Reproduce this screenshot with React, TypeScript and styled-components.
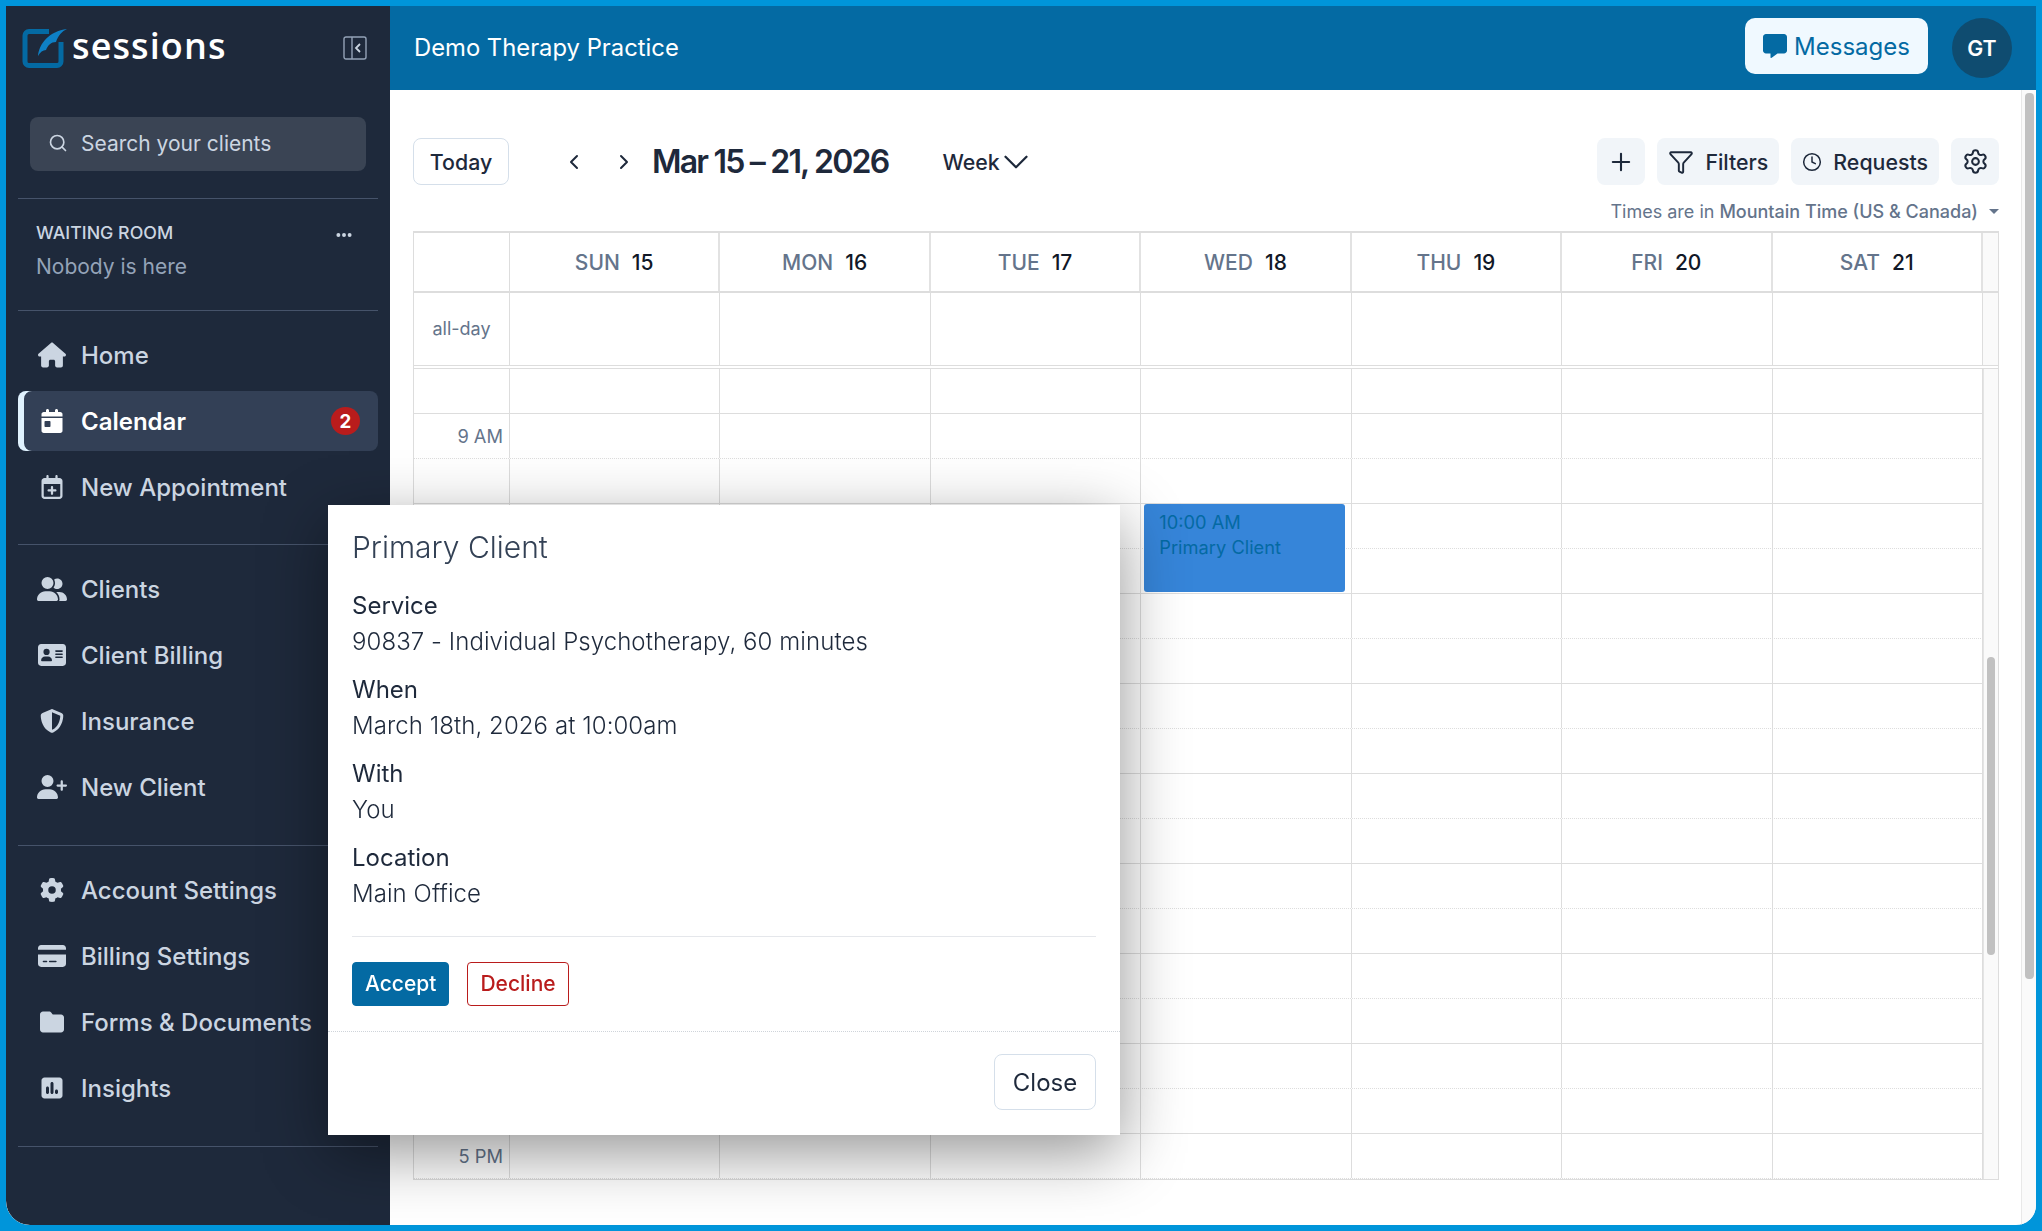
import styled, { createGlobalStyle } from 'styled-components';
import { ChevronDown, ChevronLeft, ChevronRight, Clock, Funnel, Plus, Search, Settings } from 'lucide-react';
import {
  FaAddressCard,
  FaCalendarDay,
  FaCreditCard,
  FaEllipsis,
  FaFolder,
  FaGear,
  FaHouse,
  FaMessage,
  FaRegCalendarPlus,
  FaShieldHalved,
  FaSquarePollVertical,
  FaUserGroup,
  FaUserPlus,
} from 'react-icons/fa6';
import type { ReactNode } from 'react';

const GlobalStyle = createGlobalStyle`
  html, body {
    margin: 0;
    height: 100%;
    overflow: hidden;
    font-family: Inter, "Liberation Sans", sans-serif;
    background: #0095da;
  }
  * { box-sizing: border-box; }
`;

const Frame = styled.div`
  width: 2042px;
  height: 1231px;
  padding: 6px;
  background: #0095da;
  display: flex;
`;

const Shell = styled.div`
  flex: 1;
  display: flex;
  background: #fff;
  border-radius: 0 0 20px 24px;
  overflow: hidden;
`;

const Sidebar = styled.aside`
  width: 384px;
  flex: none;
  background: #1e293b;
  border-bottom-left-radius: 24px;
  display: flex;
  flex-direction: column;
`;

const Brand = styled.div`
  height: 84px;
  display: flex;
  align-items: center;
  padding: 0 23px 0 16px;
`;

const BrandName = styled.span`
  margin: 0 0 6px -2px;
  font-family: "Open Sans", sans-serif;
  font-size: 36px;
  font-weight: 600;
  letter-spacing: 1.1px;
  color: #fff;
  flex: 1;
`;

const SearchBox = styled.div`
  margin: 27px 24px;
  height: 54px;
  background: #3a4454;
  border-radius: 8px;
  display: flex;
  align-items: center;
  gap: 13px;
  padding: 0 0 2px 18px;
  font-size: 21px;
  color: #cbd5e1;
`;

const WaitingRoom = styled.section`
  margin: 0 12px;
  height: 113px;
  border-top: 1px solid #46536a;
  border-bottom: 1px solid #46536a;
  padding: 16px 18px 0;
`;

const WaitingHead = styled.div`
  display: flex;
  align-items: center;
  justify-content: space-between;
  height: 34px;
  font-size: 17.8px;
  font-weight: 500;
  color: #cbd5e1;
  padding-right: 7px;

  svg {
    margin-top: 5px;
  }
`;

const WaitingNote = styled.div`
  margin-top: 2px;
  font-size: 21px;
  line-height: 32px;
  color: #94a3b8;
`;

const NavGroup = styled.nav`
  margin: 0 12px;
  padding: 14px 0 28px;
  display: flex;
  flex-direction: column;
  gap: 6px;
  border-bottom: 1px solid #46536a;

  &:first-of-type {
    padding-bottom: 27px;
  }
`;

const NavRow = styled.div<{ $active?: boolean }>`
  height: 60px;
  display: flex;
  align-items: center;
  gap: 15px;
  padding: 0 18px 0 20px;
  border-radius: 8px;
  font-size: 24px;
  font-weight: ${(p) => (p.$active ? 600 : 500)};
  color: ${(p) => (p.$active ? '#fff' : '#cbd5e1')};
  background: ${(p) => (p.$active ? '#334056' : 'transparent')};
  box-shadow: ${(p) => (p.$active ? 'inset 6px 0 0 #e0f2fe' : 'none')};
`;

const NavIcon = styled.span`
  width: 28px;
  flex: none;
  display: flex;
  justify-content: center;
  font-size: 24px;
  color: inherit;

  svg {
    flex: none;
  }
`;

const NavLabel = styled.span`
  flex: 1;
`;

const Badge = styled.span`
  width: 29px;
  height: 28px;
  border-radius: 50%;
  background: #b91c1c;
  color: #fff;
  font-size: 18.67px;
  font-weight: 700;
  display: flex;
  align-items: center;
  justify-content: center;
`;

const Main = styled.div`
  flex: 1;
  min-width: 0;
  display: flex;
  flex-direction: column;
`;

const TopBar = styled.header`
  height: 84px;
  flex: none;
  background: #046aa3;
  display: flex;
  align-items: center;
  padding: 0 24px 4px 24px;
  color: #fff;
`;

const Practice = styled.div`
  flex: 1;
  padding-top: 2px;
  font-size: 23.8px;
  font-weight: 400;
`;

const MessagesButton = styled.button`
  width: 183px;
  height: 56px;
  border: 0;
  border-radius: 10px;
  background: #f0f9ff;
  color: #046aa3;
  font: 400 24px Inter, sans-serif;
  display: flex;
  align-items: center;
  justify-content: center;
  gap: 7px;
`;

const Avatar = styled.div`
  width: 60px;
  height: 60px;
  margin: 2px 0 -2px 24px;
  border-radius: 50%;
  background: #0f4c70;
  display: flex;
  align-items: center;
  justify-content: center;
  font-size: 21.33px;
  font-weight: 600;
`;

const Below = styled.div`
  flex: 1;
  min-height: 0;
  display: flex;
`;

const Content = styled.main`
  flex: 1;
  min-width: 0;
  padding: 48px 22px 0 23px;
`;

const PageScrollTrack = styled.div`
  width: 15px;
  flex: none;
  background: #fafafa;
  border-left: 1px solid #e8e8e8;
  padding: 3px 2px 0 3px;
`;

const PageScrollThumb = styled.div`
  height: 886px;
  background: #c1c1c1;
  border-radius: 4px;
`;

const Toolbar = styled.div`
  height: 47px;
  display: flex;
  align-items: center;
`;

const OutlineButton = styled.button`
  height: 47px;
  width: 96px;
  border: 1px solid #d5dfea;
  border-radius: 8px;
  background: #fff;
  color: #1e293b;
  font: 500 21.33px Inter, sans-serif;
`;

const ArrowButton = styled.button`
  width: 32px;
  height: 47px;
  border: 0;
  padding: 0;
  background: transparent;
  color: #1e293b;
  display: flex;
  align-items: center;
  justify-content: center;
  margin-left: ${(p: { $gap: number }) => p.$gap}px;
`;

const RangeTitle = styled.h1`
  margin: 0 0 0 12px;
  font-size: 32px;
  font-weight: 600;
  letter-spacing: -1.8px;
  color: #1e293b;
  white-space: nowrap;
`;

const ViewPicker = styled.div`
  margin-left: 54px;
  display: flex;
  align-items: center;
  font-size: 21.33px;
  font-weight: 500;
  color: #1e293b;
`;

const WeekChevron = styled(ChevronDown)`
  margin: -11px -11px -11px -5px;
`;

const ToolGroup = styled.div`
  margin-left: auto;
  display: flex;
  gap: 12px;
`;

const ToolButton = styled.button`
  height: 47px;
  min-width: 48px;
  padding: 0 ${(p: { $pad?: number }) => p.$pad ?? 0}px;
  border: 0;
  border-radius: 8px;
  background: #f1f5f9;
  color: #1e293b;
  font: 500 21.33px Inter, sans-serif;
  display: flex;
  align-items: center;
  justify-content: center;
  gap: 11px;
`;

const TimeZoneRow = styled.div`
  height: 46px;
  padding-top: 6px;
  display: flex;
  align-items: center;
  justify-content: flex-end;
  font-size: 18px;
  color: #64748b;
`;

const ZoneName = styled.span`
  font-weight: 500;
  margin-left: 5px;
`;

const Caret = styled.span`
  margin-left: 11px;
  width: 0;
  height: 0;
  border-left: 5px solid transparent;
  border-right: 5px solid transparent;
  border-top: 5px solid #64748b;
`;

const Grid = styled.div`
  border: 1px solid #dddddd;
  border-top-width: 2px;
  width: 100%;
`;

const HeadRow = styled.div`
  display: flex;
  height: 58px;
`;

const AllDayRow = styled.div`
  display: flex;
  height: 78px;
  border-top: 2px solid #dddddd;
  border-bottom: 4px double #dddddd;
`;

const GutterHead = styled.div`
  width: 96px;
  flex: none;
  border-right: 1px solid #dddddd;
`;

const AllDayLabel = styled(GutterHead)`
  display: flex;
  align-items: center;
  justify-content: center;
  padding-bottom: 2px;
  font-size: 18px;
  color: #64748b;
`;

const DayHead = styled.div`
  flex: 1;
  border-right: 2px solid #e2e2e2;
  display: flex;
  align-items: center;
  justify-content: center;
  gap: 12px;
  font-size: 21px;
  font-weight: 500;
  color: #64748b;
`;

const DayNumber = styled.span`
  color: #111827;
`;

const DayCell = styled.div`
  flex: 1;
  position: relative;
  border-right: 1px solid #dddddd;
`;

const ScrollCorner = styled.div`
  width: 15px;
  flex: none;
  background: #fafafa;
`;

const BodyWrap = styled.div`
  display: flex;
`;

const Slots = styled.div`
  flex: 1;
  min-width: 0;
`;

const SlotRow = styled.div<{ $solid: boolean }>`
  height: 45px;
  display: flex;
  border-bottom: 1px ${(p) => (p.$solid ? 'dotted' : 'solid')} #dddddd;
`;

const TimeCell = styled.div`
  width: 96px;
  flex: none;
  border-right: 1px solid #dddddd;
  display: flex;
  align-items: center;
  justify-content: flex-end;
  padding-right: 6px;
  font-size: 18.3px;
  color: #64748b;
`;

const InnerScrollTrack = styled.div`
  width: 15px;
  flex: none;
  background: #fafafa;
  border-left: 1px solid #e4e4e4;
  padding: 288px 3px 0 3px;
`;

const InnerScrollThumb = styled.div`
  height: 298px;
  background: #c1c1c1;
  border-radius: 4px;
`;

const EventCard = styled.div`
  position: absolute;
  top: 0;
  left: 3px;
  right: 6px;
  height: 88px;
  z-index: 1;
  border-radius: 3px;
  background: #3685d9;
  color: #046aa3;
  font-size: 18.3px;
  font-weight: 400;
  line-height: 25px;
  padding: 6px 15px;
`;

const Modal = styled.div`
  position: fixed;
  left: 328px;
  top: 505px;
  width: 792px;
  height: 630px;
  z-index: 10;
  background: #fff;
  box-shadow: 0 18px 60px rgba(0, 0, 0, 0.42);
`;

const ModalBody = styled.div`
  padding: 22px 24px 0;
`;

const ModalTitle = styled.h2`
  margin: 0 0 21px;
  font-size: 30px;
  line-height: 40px;
  font-weight: 300;
  color: #334155;
`;

const DetailLabel = styled.div`
  font-size: 24px;
  line-height: 36px;
  color: #1e293b;
`;

const DetailValue = styled.div`
  font-size: 24px;
  line-height: 36px;
  font-weight: 300;
  letter-spacing: 0.07px;
  color: #1e293b;
  margin-bottom: 12px;
`;

const ActionBar = styled.div`
  margin-top: 24px;
  padding: 25px 0;
  border-top: 1px solid #e5e7eb;
  display: flex;
  gap: 18px;
`;

const ActionButton = styled.button<{ $danger?: boolean }>`
  height: 44px;
  padding: 0 12px 2px;
  border-radius: 4px;
  border: 1px solid ${(p) => (p.$danger ? '#b91c1c' : '#046aa3')};
  background: ${(p) => (p.$danger ? '#fff' : '#046aa3')};
  color: ${(p) => (p.$danger ? '#b91c1c' : '#fff')};
  font: 500 21px Inter, sans-serif;
`;

const ModalFooter = styled.div`
  border-top: 1px dotted #cfd4da;
  padding: 22px 24px 24px;
  display: flex;
  justify-content: flex-end;
`;

const CloseButton = styled.button`
  width: 102px;
  height: 56px;
  border: 1px solid #d5dfea;
  border-radius: 8px;
  background: #fff;
  color: #1e293b;
  font: 400 24px Inter, sans-serif;
`;

const Logo = () => (
  <svg width="52" height="40" viewBox="0 0 52 40" fill="none">
    <path
      d="M27 3.5H7a4 4 0 0 0-4 4v26a4 4 0 0 0 4 4h28a4 4 0 0 0 4-4V14"
      stroke="#046aa3"
      strokeWidth="5"
    />
    <path d="M16 28C17 16 27 3 45 1C40 3 36 8 34 14C29 14 26 17 24 22C21 22 18 24 16 28Z" fill="#0e80c5" />
  </svg>
);

const CollapseIcon = () => (
  <svg width="24" height="24" viewBox="0 0 24 24" fill="none" stroke="#94a3b8" strokeWidth="1.4">
    <rect x="1" y="1" width="22" height="22" rx="2" />
    <path d="M9 1v22" />
    <path d="M17 8l-4 4 4 4" stroke="#cbd5e1" strokeWidth="1.8" />
  </svg>
);

const days = [
  ['SUN', '15'],
  ['MON', '16'],
  ['TUE', '17'],
  ['WED', '18'],
  ['THU', '19'],
  ['FRI', '20'],
  ['SAT', '21'],
];

const slotLabels: Record<number, string> = { 1: '9 AM', 17: '5 PM' };

const Item = ({ icon, label, children, active }: { icon: ReactNode; label: string; children?: ReactNode; active?: boolean }) => (
  <NavRow $active={active}>
    <NavIcon>{icon}</NavIcon>
    <NavLabel>{label}</NavLabel>
    {children}
  </NavRow>
);

export default function App() {
  return (
    <>
      <GlobalStyle />
      <Frame>
        <Shell>
          <Sidebar>
            <Brand>
              <Logo />
              <BrandName>sessions</BrandName>
              <CollapseIcon />
            </Brand>
            <SearchBox>
              <Search size={20} strokeWidth={2} />
              Search your clients
            </SearchBox>
            <WaitingRoom>
              <WaitingHead>
                WAITING ROOM
                <FaEllipsis size={18} />
              </WaitingHead>
              <WaitingNote>Nobody is here</WaitingNote>
            </WaitingRoom>
            <NavGroup>
              <Item icon={<FaHouse size={28} />} label="Home" />
              <Item icon={<FaCalendarDay />} label="Calendar" active>
                <Badge>2</Badge>
              </Item>
              <Item icon={<FaRegCalendarPlus />} label="New Appointment" />
            </NavGroup>
            <NavGroup>
              <Item icon={<FaUserGroup size={30} />} label="Clients" />
              <Item icon={<FaAddressCard size={28} />} label="Client Billing" />
              <Item icon={<FaShieldHalved />} label="Insurance" />
              <Item icon={<FaUserPlus size={30} />} label="New Client" />
            </NavGroup>
            <NavGroup>
              <Item icon={<FaGear />} label="Account Settings" />
              <Item icon={<FaCreditCard size={28} />} label="Billing Settings" />
              <Item icon={<FaFolder />} label="Forms & Documents" />
              <Item icon={<FaSquarePollVertical />} label="Insights" />
            </NavGroup>
          </Sidebar>
          <Main>
            <TopBar>
              <Practice>Demo Therapy Practice</Practice>
              <MessagesButton>
                <FaMessage size={24} />
                Messages
              </MessagesButton>
              <Avatar>GT</Avatar>
            </TopBar>
            <Below>
              <Content>
                <Toolbar>
                  <OutlineButton>Today</OutlineButton>
                  <ArrowButton $gap={49}>
                    <ChevronLeft size={24} />
                  </ArrowButton>
                  <ArrowButton $gap={18}>
                    <ChevronRight size={24} />
                  </ArrowButton>
                  <RangeTitle>Mar 15 – 21, 2026</RangeTitle>
                  <ViewPicker>
                    Week
                    <WeekChevron size={42} strokeWidth={1.3} />
                  </ViewPicker>
                  <ToolGroup>
                    <ToolButton>
                      <Plus size={28} strokeWidth={1.8} />
                    </ToolButton>
                    <ToolButton $pad={11}>
                      <Funnel size={26} strokeWidth={1.8} />
                      Filters
                    </ToolButton>
                    <ToolButton $pad={11}>
                      <Clock size={20} strokeWidth={1.8} />
                      Requests
                    </ToolButton>
                    <ToolButton>
                      <Settings size={27} strokeWidth={1.8} />
                    </ToolButton>
                  </ToolGroup>
                </Toolbar>
                <TimeZoneRow>
                  Times are in<ZoneName>Mountain Time (US &amp; Canada)</ZoneName>
                  <Caret />
                </TimeZoneRow>
                <Grid>
                  <HeadRow>
                    <GutterHead />
                    {days.map(([name, date]) => (
                      <DayHead key={name}>
                        {name}
                        <DayNumber>{date}</DayNumber>
                      </DayHead>
                    ))}
                    <ScrollCorner />
                  </HeadRow>
                  <AllDayRow>
                    <AllDayLabel>all-day</AllDayLabel>
                    {days.map(([name]) => (
                      <DayCell key={name} />
                    ))}
                    <ScrollCorner />
                  </AllDayRow>
                  <BodyWrap>
                    <Slots>
                      {Array.from({ length: 18 }, (_, i) => (
                        <SlotRow key={i} $solid={i % 2 === 1}>
                          <TimeCell>{slotLabels[i]}</TimeCell>
                          {days.map(([name]) => (
                            <DayCell key={name}>
                              {i === 3 && name === 'WED' && (
                                <EventCard>
                                  10:00 AM
                                  <br />
                                  Primary Client
                                </EventCard>
                              )}
                            </DayCell>
                          ))}
                        </SlotRow>
                      ))}
                    </Slots>
                    <InnerScrollTrack>
                      <InnerScrollThumb />
                    </InnerScrollTrack>
                  </BodyWrap>
                </Grid>
              </Content>
              <PageScrollTrack>
                <PageScrollThumb />
              </PageScrollTrack>
            </Below>
          </Main>
        </Shell>
      </Frame>
      <Modal>
        <ModalBody>
          <ModalTitle>Primary Client</ModalTitle>
          <DetailLabel>Service</DetailLabel>
          <DetailValue>90837 - Individual Psychotherapy, 60 minutes</DetailValue>
          <DetailLabel>When</DetailLabel>
          <DetailValue>March 18th, 2026 at 10:00am</DetailValue>
          <DetailLabel>With</DetailLabel>
          <DetailValue>You</DetailValue>
          <DetailLabel>Location</DetailLabel>
          <DetailValue>Main Office</DetailValue>
          <ActionBar>
            <ActionButton>Accept</ActionButton>
            <ActionButton $danger>Decline</ActionButton>
          </ActionBar>
        </ModalBody>
        <ModalFooter>
          <CloseButton>Close</CloseButton>
        </ModalFooter>
      </Modal>
    </>
  );
}
